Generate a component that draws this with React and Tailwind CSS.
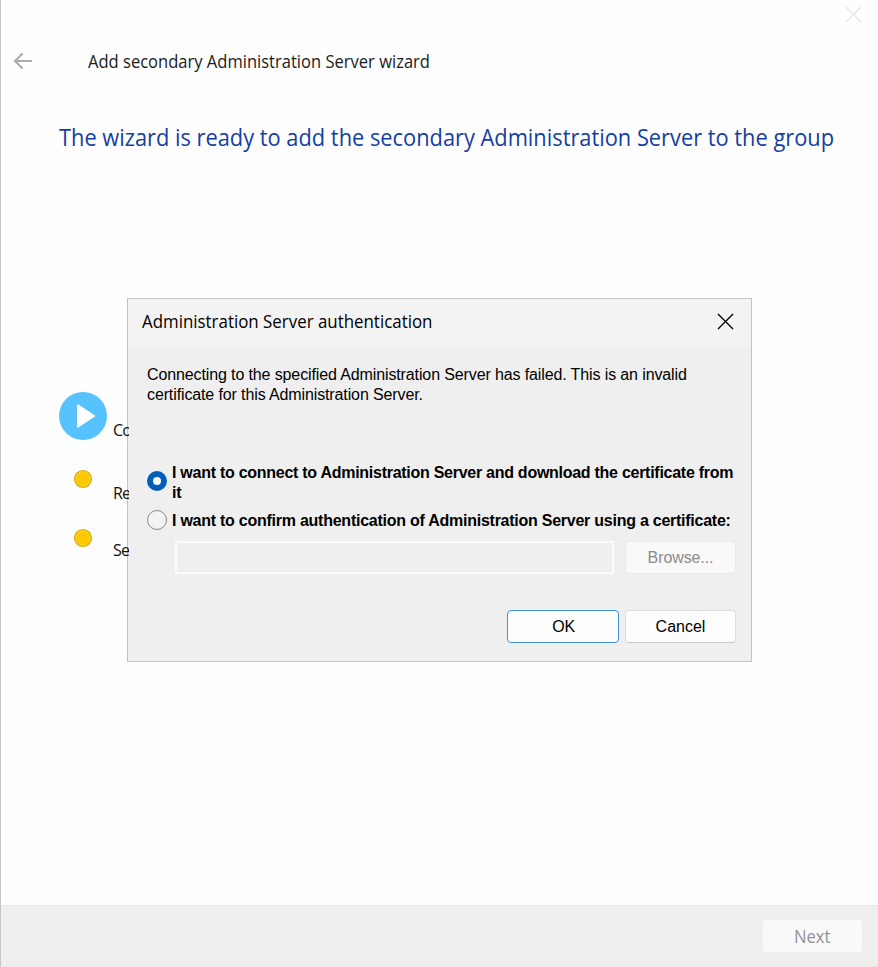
import React from "react";

function CloseIcon({ className }) {
  return (
    <svg width="17" height="17" viewBox="0 0 17 17" fill="none" stroke="currentColor" className={className}>
      <path d="M1 1L16 16M16 1L1 16" strokeWidth="1.4" />
    </svg>
  );
}

function Radio({ checked }) {
  return checked ? (
    <span className="-mt-[2px] h-5 w-5 shrink-0 rounded-full border-[6px] border-[#005fb8] bg-white" />
  ) : (
    <span className="h-5 w-5 shrink-0 rounded-full border border-[#858585] bg-[#f3f3f3]" />
  );
}

function PendingDot() {
  return (
    <svg width="20" height="20" viewBox="0 0 20 20">
      <circle cx="10" cy="10" r="8.5" fill="#fbc900" stroke="#d9ac1c" strokeWidth="1.2" />
      <circle cx="10" cy="10" r="7" fill="none" stroke="#ffd42a" strokeWidth="0.8" />
    </svg>
  );
}

function Step({ label, className, labelClassName, children }) {
  return (
    <div className={`flex w-[70px] overflow-hidden ${className}`}>
      <div className="flex w-12 shrink-0 justify-center">{children}</div>
      <span
        className={`ml-[6px] whitespace-nowrap font-['Open_Sans',sans-serif] text-[16px] leading-[20px] tracking-[-0.8px] text-[#111] ${labelClassName}`}
      >
        {label}
      </span>
    </div>
  );
}

function Dialog() {
  return (
    <div className="absolute left-[126px] top-[298px] flex h-[364px] w-[625px] flex-col border border-[#c3c3c3] bg-[#efefef] font-['Liberation_Sans',Arial,sans-serif] text-[16px] text-black">
      <div className="flex h-[48px] items-center justify-between bg-[#f3f3f3] pb-[3px] pl-[14px] pr-[17px]">
        <h2 className="-mt-[2px] origin-left scale-x-[0.965] whitespace-nowrap font-['Open_Sans',sans-serif] text-[17.5px] leading-[24px]">
          Administration Server authentication
        </h2>
        <CloseIcon className="text-black" />
      </div>
      <p className="ml-[19px] mt-[18px] whitespace-nowrap leading-[19.5px] tracking-[-0.12px] text-black">
        Connecting to the specified Administration Server has failed. This is an invalid
        <br />
        certificate for this Administration Server.
      </p>
      <div className="ml-[19px] mt-[58px] flex h-10 items-center gap-[5px] font-bold">
        <Radio checked />
        <span className="mt-px whitespace-nowrap leading-[20px] tracking-[-0.27px]">
          I want to connect to Administration Server and download the certificate from
          <br />
          it
        </span>
      </div>
      <div className="ml-[19px] mt-[8px] flex h-5 items-center gap-[5px] font-bold">
        <Radio />
        <span className="mt-px whitespace-nowrap leading-[20px] tracking-[-0.25px]">
          I want to confirm authentication of Administration Server using a certificate:
        </span>
      </div>
      <div className="ml-[47px] mt-[11px] flex gap-[11px]">
        <div className="h-[33px] w-[439px] border-2 border-[#fbfbfb] bg-[#efefef]" />
        <div className="flex h-[33px] w-[111px] items-center justify-center rounded-[3px] border border-[#ebebeb] bg-[#f9f9f9] pt-px tracking-[-0.1px] text-[#8b8b8b]">
          Browse...
        </div>
      </div>
      <div className="mr-[15px] mt-[36px] flex justify-end gap-[6px]">
        <div className="flex h-[33px] w-[112px] items-center justify-center rounded-[4px] border border-[#3f94d8] bg-[#fdfdfd] pl-px pt-px tracking-[-0.3px]">
          OK
        </div>
        <div className="flex h-[33px] w-[111px] items-center justify-center rounded-[4px] border border-[#dcdcdc] border-b-[#c8c8c8] bg-[#fdfdfd] pt-px">
          Cancel
        </div>
      </div>
    </div>
  );
}

export default function App() {
  return (
    <div className="relative flex h-[967px] w-[878px] flex-col overflow-hidden border-l border-[#c4c4c4] bg-[#fefefe]">
      <div className="flex h-[29px] items-center justify-end pr-[16px]">
        <CloseIcon className="text-[#e6e6e6]" />
      </div>
      <div className="mt-[20px] flex h-6 items-center">
        <svg width="20" height="18" viewBox="0 0 20 18" className="ml-[12px]" fill="none" stroke="#ababab" strokeWidth="2.1">
          <path d="M19 9H2M9.6 1.4L2 9l7.6 7.6" />
        </svg>
        <h1 className="-mt-px ml-[54.5px] origin-left scale-x-[0.919] whitespace-nowrap font-['Open_Sans',sans-serif] text-[18px] leading-[24px] text-[#1c1c1c]">
          Add secondary Administration Server wizard
        </h1>
      </div>
      <p className="ml-[58px] mt-[48px] w-max origin-left scale-x-[0.909] whitespace-nowrap font-['Open_Sans',sans-serif] text-[24px] leading-[32px] text-[#153ea5]">
        The wizard is ready to add the secondary Administration Server to the group
      </p>
      <div className="relative z-10 ml-[58px] mt-[239px] flex flex-col">
        <Step label="Co" className="h-12" labelClassName="mt-[28px]">
          <svg width="48" height="48" viewBox="0 0 48 48">
            <circle cx="24" cy="24" r="24" fill="#56c2ff" />
            <path d="M18.5 12.5L36 24L18.5 35.5Z" fill="#fff" stroke="#fff" strokeWidth="1" strokeLinejoin="round" />
          </svg>
        </Step>
        <Step label="Re" className="mt-[29px] h-[34px]" labelClassName="mt-[14px]">
          <PendingDot />
        </Step>
        <Step label="Se" className="mt-[25px] h-[34px]" labelClassName="mt-[12px]">
          <PendingDot />
        </Step>
      </div>
      <Dialog />
      <div className="mt-auto flex h-[62px] items-center justify-end border-y border-[#eaeaea] bg-[#eeeeee] pr-[16px]">
        <div className="flex h-[32px] w-[99px] items-center justify-center rounded-[3px] bg-[#f9f9f9] font-['Open_Sans',sans-serif] text-[17.5px] text-[#929292]">
          <span className="mt-px scale-x-[0.95]">Next</span>
        </div>
      </div>
    </div>
  );
}
